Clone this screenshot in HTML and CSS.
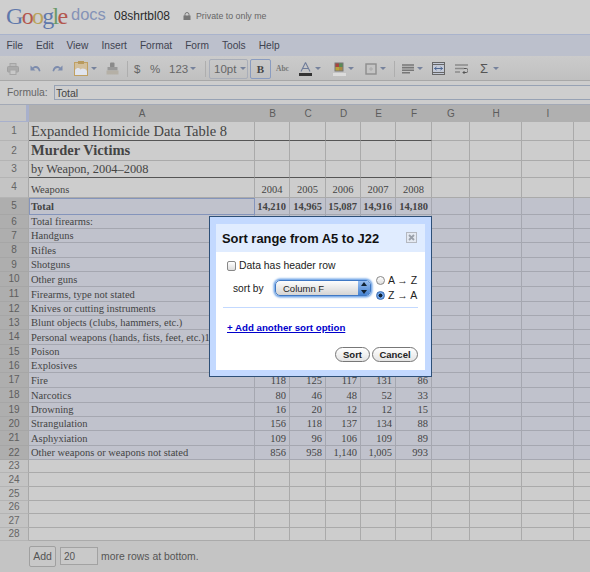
FILE: index.html
```html
<!DOCTYPE html>
<html lang="en">
<head>
<meta charset="utf-8">
<title>08shrtbl08 - Google Docs</title>
<link rel="stylesheet" href="styles.css">
</head>
<body>
<div class="app">
  <header class="top">
    <div class="logo"><span class="b">G</span><span class="r">o</span><span class="y">o</span><span class="b">g</span><span class="g">l</span><span class="r">e</span></div>
    <div class="product">docs</div>
    <div class="docname">08shrtbl08</div>
    <svg class="lock" viewBox="0 0 8 8"><path d="M2 4V2.5a2 2 0 0 1 4 0V4" fill="none" stroke="#777" stroke-width="1"/><rect x="0.5" y="3.5" width="7" height="4.5" fill="#777"/></svg>
    <div class="privacy">Private to only me</div>
  </header>
  <nav class="menu">
    <span>File</span><span>Edit</span><span>View</span><span>Insert</span><span>Format</span><span>Form</span><span>Tools</span><span>Help</span>
  </nav>
  <div class="toolbar">
    <svg class="ic i-print" viewBox="0 0 12 12"><rect x="3" y="0.5" width="6" height="3" fill="#bbb" stroke="#a5a5a5"/><rect x="0.5" y="3.5" width="11" height="5.5" rx="1" fill="#aaa" stroke="#a0a0a0"/><rect x="3" y="7" width="6" height="4.5" fill="#c8c8c8" stroke="#a5a5a5"/></svg>
    <svg class="ic i-undo" viewBox="0 0 11 10"><path d="M0.5 1.5V6.5H5.5L3.6 4.7C5.6 3.4 8 4.2 9 7.5L10.5 7C9.6 2.2 5.7 0.8 2.6 3.4Z" fill="#7d8cad"/></svg>
    <svg class="ic i-redo" viewBox="0 0 11 10"><path d="M10.5 1.5V6.5H5.5L7.4 4.7C5.4 3.4 3 4.2 2 7.5L0.5 7C1.4 2.2 5.3 0.8 8.4 3.4Z" fill="#7d8cad"/></svg>
    <svg class="ic i-paste" viewBox="0 0 14 15"><rect x="0.5" y="1.5" width="13" height="13" fill="#d2bf9c" stroke="#c0a062"/><rect x="4" y="0" width="6" height="3" fill="#b89a5e"/><path d="M1 14V9C3 6.5 5 6.5 6.5 8.5C8 7 11 7 13 10V14Z" fill="#e0e4ee"/></svg>
    <i class="arrow a-paste"></i>
    <svg class="ic i-paint" viewBox="0 0 13 13"><rect x="4" y="0.5" width="4.5" height="5" rx="1" fill="#8a8a8a"/><rect x="1.5" y="5" width="10" height="3.5" fill="#999"/><path d="M0.5 8.5H12.5V12.5H0.5Z" fill="#b5b0a6"/></svg>
    <i class="sep s1"></i>
    <span class="tt t-dollar">$</span>
    <span class="tt t-pct">%</span>
    <span class="tt t-num">123</span>
    <i class="arrow a-num"></i>
    <i class="sep s2"></i>
    <div class="btn fontsize"><span>10pt</span><i class="arrow a-in"></i></div>
    <div class="btn bold"><span>B</span></div>
    <span class="abc">Abc</span>
    <svg class="ic i-text" viewBox="0 0 13 14"><path d="M6.5 0.5L2 9.5M6.5 0.5L11 9.5M3.8 6.5H9.2" fill="none" stroke="#6f7c9a" stroke-width="1.1"/><rect x="0" y="11" width="13" height="3" fill="#333"/></svg>
    <i class="arrow a-text"></i>
    <svg class="ic i-fill" viewBox="0 0 13 14"><rect x="1.5" y="0.5" width="9" height="9" fill="#777"/><rect x="2.5" y="1.5" width="3.5" height="3.5" fill="#a8443f"/><rect x="6" y="1.5" width="3.5" height="3.5" fill="#5b8a55"/><rect x="2.5" y="5" width="3.5" height="3.5" fill="#b9a13c"/><rect x="6" y="5" width="3.5" height="3.5" fill="#a98a45"/><rect x="0" y="11" width="13" height="3" fill="#dcdcdc"/></svg>
    <i class="arrow a-fill"></i>
    <svg class="ic i-border" viewBox="0 0 12 12"><rect x="1" y="1" width="10" height="10" fill="#c4c4c4" stroke="#8d8d8d" stroke-width="1.4"/><path d="M6 4V8M4 6H8" stroke="#aaa" stroke-width="1"/></svg>
    <i class="arrow a-border"></i>
    <i class="sep s3"></i>
    <svg class="ic i-align" viewBox="0 0 12 10"><path d="M0 1H12M0 3.6H12M0 6.2H12M0 8.8H8" stroke="#777" stroke-width="1.6"/></svg>
    <i class="arrow a-align"></i>
    <svg class="ic i-merge" viewBox="0 0 13 13"><rect x="0.5" y="0.5" width="12" height="12" fill="#c3c9d6" stroke="#666"/><path d="M0 2.5H13M0 10.5H13" stroke="#666"/><path d="M2.5 6.5H10.5M2.5 6.5L4.5 5M2.5 6.5L4.5 8M10.5 6.5L8.5 5M10.5 6.5L8.5 8" fill="none" stroke="#4e6792"/></svg>
    <svg class="ic i-wrap" viewBox="0 0 13 10"><path d="M0 1H13M0 4.5H9M0 8H5" stroke="#8a8a8a" stroke-width="1.3"/><path d="M9 4.5H11.5C13.5 4.5 13.5 8.5 11.5 8.5H8M9.5 7L8 8.5L9.5 10" fill="none" stroke="#555"/></svg>
    <span class="sigma">Σ</span>
    <i class="arrow a-sigma"></i>
  </div>
  <div class="formula">
    <label class="f-label" for="f">Formula:</label>
    <input id="f" class="f-input" type="text" value="Total">
  </div>
  <div class="sheet">
    <table class="grid">
      <colgroup><col class="c0"><col class="ca"><col class="cb"><col class="cc"><col class="cb"><col class="cb"><col class="cc"><col class="cg"><col class="ch"><col class="ch"><col class="ch"></colgroup>
      <thead>
        <tr class="rh"><th class="corner"></th><th>A</th><th>B</th><th>C</th><th>D</th><th>E</th><th>F</th><th>G</th><th>H</th><th>I</th><th></th></tr>
      </thead>
      <tbody>
        <tr class="r1 heavy"><th>1</th><td class="big">Expanded Homicide Data Table 8</td><td></td><td></td><td></td><td></td><td></td><td class="nh"></td><td class="nh"></td><td class="nh"></td><td class="nh"></td></tr>
        <tr class="r2"><th>2</th><td class="big strong">Murder Victims</td><td></td><td></td><td></td><td></td><td></td><td></td><td></td><td></td><td></td></tr>
        <tr class="r3 heavy"><th>3</th><td class="mid">by Weapon, 2004–2008</td><td></td><td></td><td></td><td></td><td></td><td class="nh"></td><td class="nh"></td><td class="nh"></td><td class="nh"></td></tr>
        <tr class="r4"><th>4</th><td>Weapons</td><td class="y4">2004</td><td class="y4">2005</td><td class="y4">2006</td><td class="y4">2007</td><td class="y4">2008</td><td></td><td></td><td></td><td></td></tr>
        <tr class="r5 sel"><th>5</th><td class="active strong">Total</td><td class="n strong">14,210</td><td class="n strong">14,965</td><td class="n strong">15,087</td><td class="n strong">14,916</td><td class="n strong">14,180</td><td></td><td></td><td></td><td></td></tr>
        <tr class="p14 sel"><th>6</th><td>Total firearms:</td><td></td><td></td><td></td><td></td><td></td><td></td><td></td><td></td><td></td></tr>
        <tr class="p14 sel"><th>7</th><td>Handguns</td><td></td><td></td><td></td><td></td><td></td><td></td><td></td><td></td><td></td></tr>
        <tr class="p15 sel"><th>8</th><td>Rifles</td><td></td><td></td><td></td><td></td><td></td><td></td><td></td><td></td><td></td></tr>
        <tr class="p14 sel"><th>9</th><td>Shotguns</td><td></td><td></td><td></td><td></td><td></td><td></td><td></td><td></td><td></td></tr>
        <tr class="p15 sel"><th>10</th><td>Other guns</td><td></td><td></td><td></td><td></td><td></td><td></td><td></td><td></td><td></td></tr>
        <tr class="p15 sel"><th>11</th><td>Firearms, type not stated</td><td></td><td></td><td></td><td></td><td></td><td></td><td></td><td></td><td></td></tr>
        <tr class="p14 sel"><th>12</th><td>Knives or cutting instruments</td><td></td><td></td><td></td><td></td><td></td><td></td><td></td><td></td><td></td></tr>
        <tr class="p14 sel"><th>13</th><td>Blunt objects (clubs, hammers, etc.)</td><td></td><td></td><td></td><td></td><td></td><td></td><td></td><td></td><td></td></tr>
        <tr class="p15 sel"><th>14</th><td>Personal weapons (hands, fists, feet, etc.)1</td><td></td><td></td><td></td><td></td><td></td><td></td><td></td><td></td><td></td></tr>
        <tr class="p14 sel"><th>15</th><td>Poison</td><td></td><td></td><td></td><td></td><td></td><td></td><td></td><td></td><td></td></tr>
        <tr class="p14 sel"><th>16</th><td>Explosives</td><td></td><td></td><td></td><td></td><td></td><td></td><td></td><td></td><td></td></tr>
        <tr class="p15 sel"><th>17</th><td>Fire</td><td class="n">118</td><td class="n">125</td><td class="n">117</td><td class="n">131</td><td class="n">86</td><td></td><td></td><td></td><td></td></tr>
        <tr class="p15 sel"><th>18</th><td>Narcotics</td><td class="n">80</td><td class="n">46</td><td class="n">48</td><td class="n">52</td><td class="n">33</td><td></td><td></td><td></td><td></td></tr>
        <tr class="p14 sel"><th>19</th><td>Drowning</td><td class="n">16</td><td class="n">20</td><td class="n">12</td><td class="n">12</td><td class="n">15</td><td></td><td></td><td></td><td></td></tr>
        <tr class="p14 sel"><th>20</th><td>Strangulation</td><td class="n">156</td><td class="n">118</td><td class="n">137</td><td class="n">134</td><td class="n">88</td><td></td><td></td><td></td><td></td></tr>
        <tr class="p15 sel"><th>21</th><td>Asphyxiation</td><td class="n">109</td><td class="n">96</td><td class="n">106</td><td class="n">109</td><td class="n">89</td><td></td><td></td><td></td><td></td></tr>
        <tr class="p14 sel"><th>22</th><td>Other weapons or weapons not stated</td><td class="n">856</td><td class="n">958</td><td class="n">1,140</td><td class="n">1,005</td><td class="n">993</td><td></td><td></td><td></td><td></td></tr>
        <tr class="p13"><th>23</th><td></td><td></td><td></td><td></td><td></td><td></td><td></td><td></td><td></td><td></td></tr>
        <tr class="p14"><th>24</th><td></td><td></td><td></td><td></td><td></td><td></td><td></td><td></td><td></td><td></td></tr>
        <tr class="p14"><th>25</th><td></td><td></td><td></td><td></td><td></td><td></td><td></td><td></td><td></td><td></td></tr>
        <tr class="p13"><th>26</th><td></td><td></td><td></td><td></td><td></td><td></td><td></td><td></td><td></td><td></td></tr>
        <tr class="p14"><th>27</th><td></td><td></td><td></td><td></td><td></td><td></td><td></td><td></td><td></td><td></td></tr>
        <tr class="p13"><th>28</th><td></td><td></td><td></td><td></td><td></td><td></td><td></td><td></td><td></td><td></td></tr>
      </tbody>
    </table>
  </div>
  <footer class="foot">
    <button class="add" type="button">Add</button>
    <input class="count" type="text" value="20">
    <span class="more">more rows at bottom.</span>
  </footer>

  <div class="dialog">
    <div class="dialog-in">
      <div class="d-title">
        <span>Sort range from A5 to J22</span>
        <span class="d-close"><svg viewBox="0 0 11 11"><rect x="0.5" y="0.5" width="10" height="10" fill="#e4e9f2" stroke="#b4b8c0"/><path d="M3 3L8 8M8 3L3 8" stroke="#9aa0aa" stroke-width="1.8"/></svg></span>
      </div>
      <div class="d-body">
        <label class="d-check"><input type="checkbox">Data has header row</label>
        <div class="d-sort">
          <span class="sortby">sort by</span>
          <div class="select"><span>Column F</span><i class="stepper"></i></div>
          <div class="radios">
            <label class="radio"><input type="radio" name="o">A → Z</label>
            <label class="radio"><input type="radio" name="o" checked>Z → A</label>
          </div>
        </div>
        <div class="d-rule"></div>
        <a class="d-link" href="#">+ Add another sort option</a>
        <div class="d-btns">
          <button class="pill p-sort" type="button">Sort</button>
          <button class="pill p-cancel" type="button">Cancel</button>
        </div>
      </div>
    </div>
  </div>
</div>
</body>
</html>
```
FILE: styles.css
```css
* { box-sizing: border-box; }
html, body { margin: 0; padding: 0; }
body { width: 590px; height: 572px; overflow: hidden; background: #cdcdcd; font-family: "Liberation Sans", Arial, sans-serif; color: #444; }
.app { position: relative; width: 590px; height: 572px; overflow: hidden; display: flex; flex-direction: column; }

.top { height: 35px; flex: none; display: flex; align-items: center; background: #cfcfcf; border-bottom: 1px solid #a9b3cc; padding-left: 6px; }
.logo { font-family: "Liberation Serif", serif; font-size: 24px; letter-spacing: -1.7px; line-height: 28px; width: 65px; margin-top: -3px; }
.logo .b { color: #5f78ab; }
.logo .r { color: #b3574e; }
.logo .y { color: #b9a35b; }
.logo .g { color: #6b9a68; }
.product { font-size: 16.5px; color: #8593b7; width: 43px; margin-top: -5px; }
.docname { font-size: 12px; color: #2a2a2a; width: 69px; margin-top: -3px; }
.lock { width: 8px; height: 8px; margin-top: -3px; }
.privacy { font-size: 8.8px; color: #666; margin-left: 5px; margin-top: -2px; }

.menu { height: 21px; flex: none; background: #bcc0cc; display: flex; align-items: center; padding-left: 6.5px; gap: 13px; font-size: 10.2px; color: #3f4350; }

.toolbar { height: 25px; flex: none; display: flex; align-items: center; background: linear-gradient(#cbcbcb, #c0c0c0); border-bottom: 1px solid #a8a8a8; color: #666; padding-top: 1px; }
.ic { flex: none; display: block; }
.i-print { width: 12px; height: 12px; margin-left: 7px; }
.i-undo { width: 11px; height: 10px; margin-left: 11px; }
.i-redo { width: 11px; height: 10px; margin-left: 11px; }
.i-paste { width: 14px; height: 15px; margin-left: 11px; }
.arrow { flex: none; width: 0; height: 0; border-left: 3px solid transparent; border-right: 3px solid transparent; border-top: 3px solid #76829c; }
.a-paste { margin-left: 3px; }
.i-paint { width: 13px; height: 13px; margin-left: 9px; }
.sep { flex: none; width: 1px; height: 16px; background: #aeaeae; }
.s1 { margin-left: 8px; }
.tt { flex: none; font-size: 11.5px; color: #666; }
.t-dollar { margin-left: 6px; width: 7px; }
.t-pct { margin-left: 9px; width: 9px; }
.t-num { margin-left: 10px; width: 18px; }
.a-num { margin-left: 3px; }
.s2 { margin-left: 9px; }
.btn { flex: none; display: flex; align-items: center; border: 1px solid #a9aeb9; border-radius: 2px; height: 20px; }
.fontsize { margin-left: 3px; width: 39px; font-size: 11.5px; padding-left: 4px; color: #666; }
.a-in { margin-left: 4px; }
.bold { margin-left: 2px; width: 21px; height: 20px; justify-content: center; border-color: #8a9cc0; font-family: "Liberation Serif", serif; font-weight: bold; font-size: 11px; color: #444; }
.abc { flex: none; margin-left: 5px; width: 14px; font-family: "Liberation Serif", serif; font-size: 7.5px; font-weight: bold; color: #777; }
.i-text { width: 13px; height: 14px; margin-left: 9px; }
.a-text { margin-left: 3px; }
.i-fill { width: 13px; height: 14px; margin-left: 12px; }
.a-fill { margin-left: 2px; }
.i-border { width: 12px; height: 12px; margin-left: 11px; }
.a-border { margin-left: 3px; }
.s3 { margin-left: 8px; }
.i-align { width: 12px; height: 10px; margin-left: 7px; }
.a-align { margin-left: 3px; }
.i-merge { width: 13px; height: 13px; margin-left: 9px; }
.i-wrap { width: 13px; height: 10px; margin-left: 10px; }
.sigma { flex: none; margin-left: 12px; width: 9px; font-size: 13px; color: #555; }
.a-sigma { margin-left: 4px; }

.formula { height: 23px; flex: none; display: flex; align-items: center; background: #cdcdcd; padding-left: 7px; }
.f-label { font-size: 10.3px; color: #666; width: 47px; }
.f-input { flex: 1; height: 15px; border: 1px solid #97a2b4; border-right: 0; background: #cecece; font: 10.5px "Liberation Sans", Arial, sans-serif; color: #444; padding: 0 1px; outline: 0; }

.sheet { height: 437px; flex: none; overflow: hidden; border-top: 1px solid #a3a9b6; }
.grid { table-layout: fixed; width: 626px; border-collapse: separate; border-spacing: 0; font-family: "Liberation Serif", serif; font-size: 10.5px; color: #444; }
.c0 { width: 29px; }
.ca { width: 226px; }
.cb { width: 35px; }
.cc { width: 36px; }
.cg { width: 38px; }
.ch { width: 52px; }
.grid th { padding: 0; font: 10px/12px "Liberation Sans", Arial, sans-serif; font-weight: normal; color: #666; background: #c4c4c4; text-align: center; }
.grid tbody th { border-bottom: 1px solid #b4b4b4; border-right: 1px solid #a8a8a8; }
.grid td { padding: 0 0 0 2px; line-height: 13px; white-space: nowrap; overflow: hidden; background: #cdcdcd; border-right: 1px solid #aaa; border-bottom: 1px solid #aaa; vertical-align: middle; }
.rh { height: 17px; }
.rh th { background: #b0b0b0; color: #5c5c5c; border: 0; }
.rh .corner { background: #c4c4c4; border-right: 3px solid #a8b0cc; border-bottom: 1px solid #a8b0cc; }
.r1 { height: 19px; }
.r2 { height: 20px; }
.r3 { height: 17px; }
.r4 { height: 20px; }
.r5 { height: 17px; }
.p13 { height: 13px; }
.p14 { height: 14px; }
.p15 { height: 15px; }
.grid td.big { font-size: 14.5px; line-height: 17px; }
.grid td.mid { font-size: 12.4px; line-height: 15px; }
.strong { font-weight: bold; }
.heavy td { border-bottom-color: #555; }
.heavy td.nh { border-bottom-color: #aaa; }
.r4 td { vertical-align: bottom; padding-bottom: 1px; }
.r4 th { vertical-align: top; padding-top: 3px; }
.grid td.y4 { text-align: center; padding-left: 0; }
.grid td.n { text-align: right; padding: 0 3px 0 0; }
.sel td { background: #c0c2cc; border-right-color: #a5a7b0; border-bottom-color: #a5a7b0; }
.grid .sel th { background: #aeaeae; border-bottom-color: #a6a6a6; color: #5e5e5e; }
.grid td.active { border: 1px solid #8494bb; padding-left: 1px; }

.foot { flex: 1; display: flex; align-items: center; background: #c4c4c4; padding-left: 29px; padding-bottom: 1px; }
.add { width: 27px; height: 21px; padding: 0; border: 1px solid #a0a0a0; border-radius: 2px; background: #c8c8c8; font: 10.5px "Liberation Sans", Arial, sans-serif; color: #555; }
.count { width: 38px; height: 18px; margin-left: 4px; border: 1px solid #a2a2a2; background: #c9c9c9; font: 10px "Liberation Sans", Arial, sans-serif; color: #555; padding: 0 3px; }
.more { font-size: 10.4px; color: #555; margin-left: 3px; }

.dialog { position: absolute; left: 209px; top: 216px; width: 223px; height: 161px; border: 1px solid #2e5078; background: #c3d9ff; padding: 7px 6px 6px; color: #111; }
.dialog-in { height: 146px; display: flex; flex-direction: column; background: #fff; }
.d-title { height: 28px; flex: none; display: flex; align-items: center; justify-content: space-between; padding: 0 8px 0 6px; background: #e0ecff; font-weight: bold; font-size: 12.9px; color: #111; }
.d-close { width: 11px; height: 11px; display: block; margin-bottom: 2px; }
.d-close svg { display: block; width: 11px; height: 11px; }
.d-body { flex: 1; display: flex; flex-direction: column; padding: 7px 7px 0 7px; font-size: 10.4px; color: #222; }
.d-check { display: flex; align-items: center; height: 13px; margin-left: 4px; }
.d-check input { appearance: none; margin: 0 3px 0 0; width: 9px; height: 10px; border: 1px solid #888; border-radius: 2px; background: linear-gradient(#fff, #ddd); }
.d-sort { display: flex; align-items: center; height: 28px; margin-top: 2px; }
.sortby { margin-left: 10px; width: 42px; font-size: 10.2px; }
.select { width: 96px; height: 16px; display: flex; align-items: center; justify-content: space-between; border-radius: 5px; padding-left: 7px; font-size: 9.5px; color: #222; background: linear-gradient(#fdfdfd, #d4d4d4); border: 1px solid #3f78c4; box-shadow: 0 0 2px 1.5px #6ea3e6; overflow: hidden; }
.stepper { width: 12px; height: 16px; background: linear-gradient(#9ec2f2, #3f7ed0); position: relative; }
.stepper::before { content: ""; position: absolute; left: 3px; top: 2px; border-left: 3px solid transparent; border-right: 3px solid transparent; border-bottom: 4px solid #123; }
.stepper::after { content: ""; position: absolute; left: 3px; bottom: 2px; border-left: 3px solid transparent; border-right: 3px solid transparent; border-top: 4px solid #123; }
.radios { display: flex; flex-direction: column; margin-left: 5px; font-size: 10.5px; gap: 2px; margin-top: -1px; }
.radio { display: flex; align-items: center; height: 13px; }
.radio input { appearance: none; margin: 0 3px 0 0; width: 9px; height: 9px; border: 1px solid #888; border-radius: 50%; background: linear-gradient(#fff, #ddd); }
.radio input:checked { border-color: #3a6cb0; background: radial-gradient(circle, #123 0 1.8px, #6fa3e8 2.2px); }
.d-rule { height: 1px; margin-top: 5px; background: #c3d9ff; }
.d-link { margin: 14px 0 0 4px; font-size: 9.7px; line-height: 12px; font-weight: bold; color: #0000cc; text-decoration: underline; }
.d-btns { display: flex; justify-content: flex-end; gap: 2px; margin-top: 13px; }
.pill { height: 15px; padding: 0; border: 1px solid #777; border-radius: 8px; background: linear-gradient(#fff, #e4e4e4); font: bold 9.5px "Liberation Sans", Arial, sans-serif; color: #222; }
.p-sort { width: 35px; }
.p-cancel { width: 46px; }
```
